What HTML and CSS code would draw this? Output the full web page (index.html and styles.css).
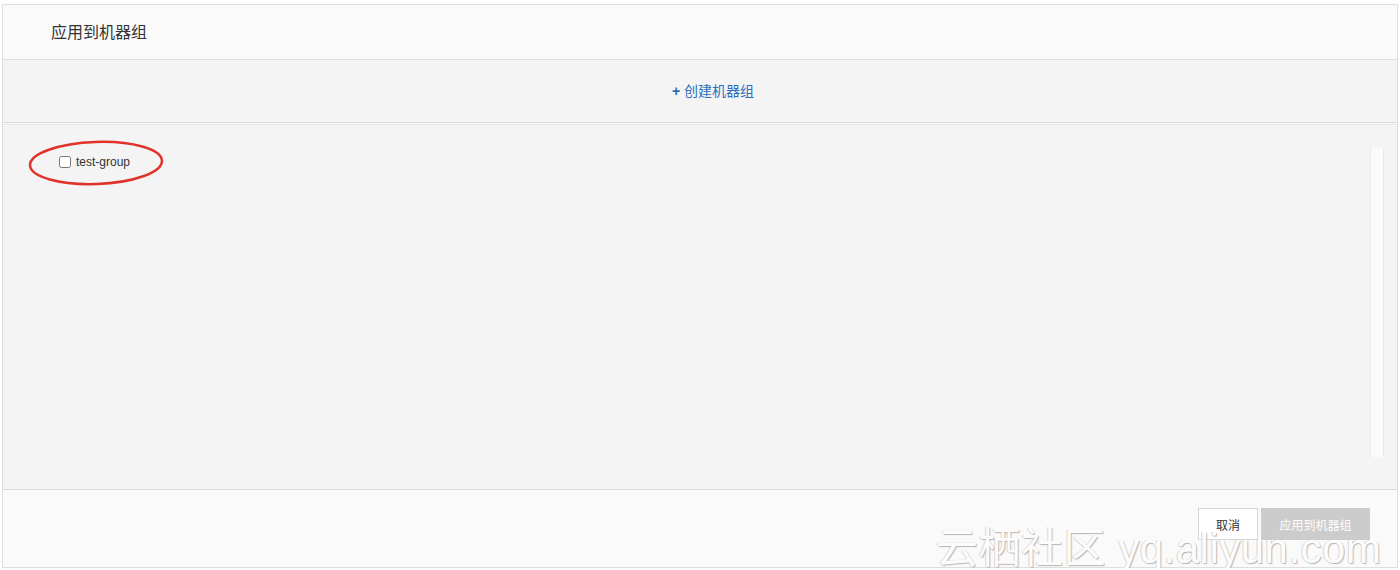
FILE: index.html
```html
<!DOCTYPE html>
<html lang="zh-CN">
<head>
    <meta charset="UTF-8">
    <title>应用到机器组</title>
    <link rel="stylesheet" href="styles.css">
</head>
<body>
    <div class="panel">
        <div class="panel-header">应用到机器组</div>
        <div class="create-bar">
            <a class="create-link" href="#"><span class="plus">+</span> 创建机器组</a>
        </div>
        <div class="group-list">
            <div class="groups">
                <label class="group-item">
                    <input type="checkbox">
                    <span>test-group</span>
                    <svg class="mark" width="140" height="52" viewBox="0 0 140 52">
                        <ellipse cx="70" cy="26" rx="66" ry="21" transform="rotate(-2 70 26)" fill="none" stroke="#e0322a" stroke-width="2.5"/>
                    </svg>
                </label>
            </div>
            <div class="scroll-track"></div>
        </div>
        <div class="panel-footer">
            <button class="btn btn-cancel">取消</button>
            <button class="btn btn-primary" disabled>应用到机器组</button>
            <div class="watermark">云栖社区 yq.aliyun.com</div>
        </div>
    </div>
</body>
</html>
```

FILE: styles.css
```css
body {
    margin: 0;
    padding: 4px 2px 0 2px;
    background: #fff;
    font-family: "Liberation Sans", "Noto Sans CJK SC", Arial, sans-serif;
    color: #333;
}
.panel {
    height: 562px;
    border: 1px solid #dedede;
    display: flex;
    flex-direction: column;
    background: #f4f4f4;
}
.panel-header {
    height: 55px;
    box-sizing: border-box;
    padding-left: 48px;
    padding-bottom: 2px;
    display: flex;
    align-items: center;
    font-size: 16px;
    background: #fafafa;
    border-bottom: 1px solid #dcdcdc;
}
.create-bar {
    height: 63px;
    box-sizing: border-box;
    display: flex;
    align-items: center;
    justify-content: center;
    background: #f4f4f4;
    border-bottom: 1px solid #dcdcdc;
    box-shadow: 0 1px 0 #fafafa, 0 2px 0 #e8e8e8;
    margin-bottom: 2px;
    padding: 0 0 3px 26px;
}
.create-link {
    color: #2b6ebd;
    text-decoration: none;
    font-size: 14px;
}
.plus {
    font-weight: bold;
}
.group-list {
    flex: 1;
    display: flex;
    padding: 23px 13px 32px 56px;
    border-bottom: 1px solid #dcdcdc;
}
.groups {
    flex: 1;
}
.group-item {
    position: relative;
    display: inline-flex;
    align-items: center;
    gap: 5px;
    margin-top: 7px;
    font-size: 12px;
    color: #333;
}
.group-item input {
    margin: 0;
    width: 12px;
    height: 12px;
}
.mark {
    position: absolute;
    left: -33px;
    top: -18px;
}
.scroll-track {
    width: 12px;
    background: #fbfbfb;
    border-left: 1px solid #ececec;
    border-right: 1px solid #e8e8e8;
}
.panel-footer {
    position: relative;
    height: 77px;
    box-sizing: border-box;
    padding: 18px 27px 0 0;
    display: flex;
    justify-content: flex-end;
    align-items: flex-start;
    gap: 3px;
    background: #fafafa;
}
.btn {
    height: 32px;
    padding: 0 12px;
    border: 1px solid #d6d6d6;
    background: #fff;
    color: #333;
    font-family: inherit;
    font-size: 12px;
}
.btn-cancel {
    width: 60px;
}
.btn-primary {
    width: 109px;
    border-color: #cccccc;
    background: #cccccc;
    color: #fff;
}
.watermark {
    position: absolute;
    left: 933px;
    top: 24px;
    font-size: 42px;
    color: #fcfcfc;
    letter-spacing: 0.5px;
    text-shadow: 1px 1px 1px #b5b5b5, -1px 0 0 #d8d8d8;
    white-space: nowrap;
    pointer-events: none;
}
```
